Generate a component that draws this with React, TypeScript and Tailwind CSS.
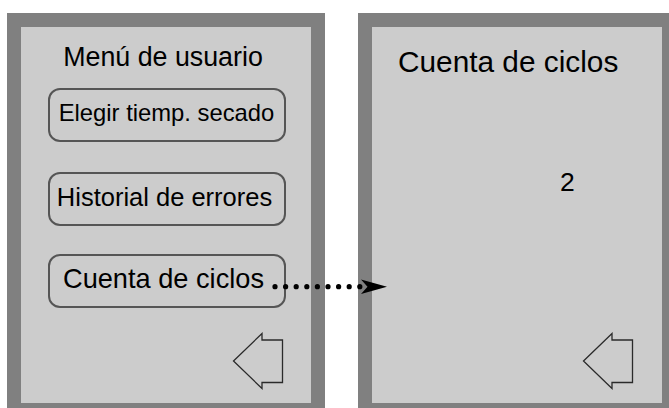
import React from "react";

const BackArrow = () => (
  <svg width="52" height="58" viewBox="0 0 52 58" className="block">
    <polygon
      points="1.5,29 30,1.5 30,8 50.5,8 50.5,50.5 30,50.5 30,56.5"
      fill="none"
      stroke="#2a2a2a"
      strokeWidth="1.3"
      strokeLinejoin="miter"
    />
  </svg>
);

export default function App() {
  const dots = Array.from({ length: 9 }, (_, i) => 275 + i * 10.6);
  return (
    <div className="relative w-[669px] h-[408px] overflow-hidden bg-white font-['Liberation_Sans',Arial,sans-serif] text-black">
      <div className="flex gap-[33px] pl-[7px] pt-[13px]">
        {/* Left panel */}
        <div className="shrink-0 w-[318px] h-[404px] border-[14px] border-[#808080] bg-[#cccccc] flex flex-col items-center">
          <div className="mt-[15px] text-[26.8px] leading-[30px] -ml-[6px]">Menú de usuario</div>
          <div className="mt-[16px] w-[238px] h-[54px] border-2 border-[#555555] rounded-[12px] flex items-center justify-center pb-[4px] text-[23.8px] leading-[28px] ml-[1px]">
            Elegir tiemp. secado
          </div>
          <div className="mt-[30px] w-[238px] h-[54px] border-2 border-[#555555] rounded-[12px] flex items-center justify-center pb-[5px] text-[25.5px] leading-[30px] ml-[1px]">
            <span className="-ml-[4px]">Historial de errores</span>
          </div>
          <div className="mt-[28px] w-[238px] h-[54px] border-2 border-[#555555] rounded-[12px] flex items-center justify-center pb-[6px] text-[27.2px] leading-[31px] ml-[1px]">
            <span className="-ml-[6px]">Cuenta de ciclos</span>
          </div>
          <div className="mt-auto self-end mr-[27px] mb-[13px]">
            <BackArrow />
          </div>
        </div>
        {/* Right panel */}
        <div className="shrink-0 w-[318px] h-[404px] border-[14px] border-[#808080] bg-[#cccccc] flex flex-col">
          <div className="mt-[18px] pl-[26px] text-[29.8px] leading-[34px]">Cuenta de ciclos</div>
          <div className="mt-[88px] pl-[188px] text-[26.5px] leading-[30px]">2</div>
          <div className="mt-auto self-end mr-[28px] mb-[13px]">
            <BackArrow />
          </div>
        </div>
      </div>
      {/* Connector arrow */}
      <svg
        className="absolute left-0 top-0 pointer-events-none"
        width="669"
        height="408"
        viewBox="0 0 669 408"
      >
        {dots.map((x) => (
          <circle key={x} cx={x} cy={286.7} r={2.6} fill="#000" />
        ))}
        <polygon points="387,286.7 361,279.5 367.5,286.7 361,293.9" fill="#000" />
      </svg>
    </div>
  );
}
